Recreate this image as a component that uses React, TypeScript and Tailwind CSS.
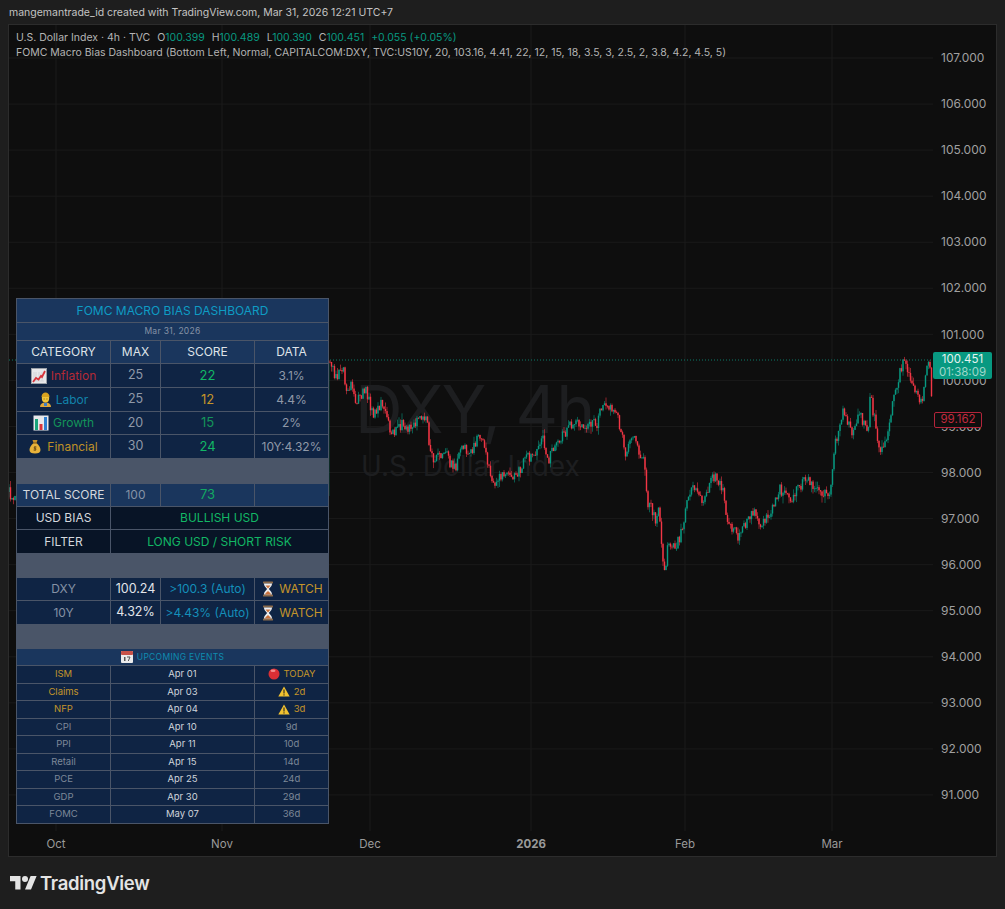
import { useMemo } from 'react'

const prices = [107, 106, 105, 104, 103, 102, 101, 100, 99, 98, 97, 96, 95, 94, 93, 92, 91]
const gridX = [56, 222, 370, 531, 685, 832]

// rough close path read off the chart, in page pixels
const path: [number, number][] = [
  [9, 492], [16, 505], [328, 362], [330, 365], [337, 373], [343, 372], [347, 393], [352, 385], [355, 400], [365, 393],
  [373, 410], [382, 403], [390, 432], [403, 427], [410, 428], [419, 415], [427, 423], [430, 447], [435, 457],
  [447, 457], [455, 467], [462, 447], [467, 455], [477, 440], [482, 443], [490, 468], [496, 482], [510, 472],
  [520, 473], [528, 455], [535, 458], [542, 437], [547, 462], [553, 445], [563, 438], [573, 418], [580, 433],
  [590, 418], [597, 425], [603, 408], [612, 408], [620, 428], [625, 453], [633, 435], [638, 455], [645, 463],
  [647, 497], [652, 507], [655, 525], [659, 507], [662, 553], [665, 570], [668, 535], [675, 553], [682, 532],
  [685, 507], [692, 487], [702, 502], [713, 477], [723, 490], [727, 520], [738, 538], [742, 523], [753, 515],
  [760, 525], [773, 510], [780, 487], [793, 500], [805, 477], [817, 493], [830, 492], [835, 447], [843, 410],
  [853, 437], [860, 412], [868, 433], [870, 398], [880, 447], [887, 437], [893, 403], [900, 370], [903, 357],
  [910, 380], [922, 403], [927, 368], [930, 370], [933, 417],
]

function interp(x: number) {
  for (let i = 1; i < path.length; i++) {
    if (x <= path[i][0]) {
      const [x0, y0] = path[i - 1]
      const [x1, y1] = path[i]
      return y0 + ((y1 - y0) * (x - x0)) / (x1 - x0)
    }
  }
  return path[path.length - 1][1]
}

function buildCandles() {
  let seed = 41
  const rnd = () => {
    seed = (seed * 16807) % 2147483647
    return seed / 2147483647
  }
  const out: { x: number; o: number; c: number; h: number; l: number }[] = []
  let prev = interp(9)
  for (let x = 9; x < 933; x += 1.5) {
    if (x > 16 && x < 328) continue
    const c = interp(x) + (rnd() - 0.5) * 11 + Math.sin(x / 3.1) * 3
    const o = prev
    const h = Math.min(o, c) - rnd() * rnd() * 8
    const l = Math.max(o, c) + rnd() * rnd() * 8
    out.push({ x, o, c, h, l })
    prev = c
  }
  return out
}

function Candles() {
  const candles = useMemo(buildCandles, [])
  return (
    <svg width="924" height="806" viewBox="9 25 924 806" className="absolute left-0 top-0">
      {gridX.map(x => (
        <line key={x} x1={x} x2={x} y1="25" y2="831" stroke="#1a1a1a" />
      ))}
      {prices.map((_, i) => (
        <line key={i} x1="9" x2="933" y1={58 + i * 46.06} y2={58 + i * 46.06} stroke="#1a1a1a" />
      ))}
      <text x="355" y="433" fontFamily="Inter, sans-serif" fontSize="66" letterSpacing="-2" fill="#1d1e20">DXY, 4h</text>
      <text x="361" y="476" fontFamily="Inter, sans-serif" fontSize="28" fill="#1d1e20">U.S. Dollar Index</text>
      <line x1="9" x2="933" y1="360" y2="360" stroke="#0b7a68" strokeDasharray="1 2" />
      {candles.map(k => {
        const col = k.c <= k.o ? '#089981' : '#f23645'
        return (
          <g key={k.x} fill={col}>
            <rect x={k.x - 0.35} y={k.h} width="0.7" height={k.l - k.h} opacity="0.8" />
            <rect x={k.x - 0.7} y={Math.min(k.o, k.c)} width="1.4" height={Math.max(0.8, Math.abs(k.c - k.o))} />
          </g>
        )
      })}
    </svg>
  )
}

function ChartUp() {
  return (
    <svg width="16" height="16" viewBox="0 0 16 16" className="shrink-0">
      <rect x="0.5" y="0.5" width="15" height="15" fill="#e8e8ea" stroke="#9aa0a8" />
      <path d="M3 4v9h10M5 4v9M8 4v9M11 4v9" stroke="#c4c7cc" strokeWidth="0.6" fill="none" />
      <path d="M2 14l3-4 2.5 1.5L10 8l1 1 3-6" stroke="#d8343c" strokeWidth="1.8" fill="none" />
    </svg>
  )
}

function Worker() {
  return (
    <svg width="13" height="16" viewBox="0 0 13 16" className="shrink-0">
      <path d="M1 15c0-3 2-4.500 5.500-4.500S12 12 12 15z" fill="#e0a93a" />
      <rect x="5" y="11" width="3" height="3" fill="#3f7fc4" />
      <ellipse cx="6.500" cy="6" rx="3.700" ry="4.500" fill="#f2c63a" />
      <path d="M2.500 5c0-6 8-6 8 0z" fill="#d8a21f" />
      <path d="M4.500 7h1.300M7.300 7h1.300" stroke="#8a6512" strokeWidth="0.8" />
    </svg>
  )
}

function Bars() {
  return (
    <svg width="16" height="16" viewBox="0 0 16 16" className="shrink-0">
      <rect x="0.5" y="0.5" width="15" height="15" fill="#e8e8ea" />
      <rect x="2" y="4" width="3" height="11" fill="#1aa37a" />
      <rect x="6.500" y="9" width="3" height="6" fill="#d8343c" />
      <rect x="11" y="2" width="3" height="13" fill="#2f7fd0" />
    </svg>
  )
}

function MoneyBag() {
  return (
    <svg width="12" height="15" viewBox="0 0 12 15" className="shrink-0">
      <path d="M3.500 1h5L7.500 4h-3z" fill="#c9922a" />
      <path d="M4.500 4h3C10 6 11.500 9 11.500 11c0 2.500-2 3.500-5.500 3.500S.5 13.500.5 11C.5 9 2 6 4.500 4z" fill="#e8b23a" />
      <rect x="4" y="3.500" width="4" height="1" fill="#7a5518" />
      <path d="M7.500 8H5.300v1.500h1.500V11H4.500M6 7v5" stroke="#6b4a12" strokeWidth="0.8" fill="none" />
    </svg>
  )
}

function Hourglass() {
  return (
    <svg width="12" height="16" viewBox="0 0 12 16" className="shrink-0">
      <rect x="1" y="0.500" width="10" height="2" rx="0.500" fill="#8b6a4a" />
      <rect x="1" y="13.500" width="10" height="2" rx="0.500" fill="#8b6a4a" />
      <path d="M2 2.500h8c0 3-2.500 4-3 5.500.5 1.500 3 2.500 3 5.500H2c0-3 2.500-4 3-5.500-.5-1.500-3-2.500-3-5.500z" fill="#eceef0" />
      <path d="M3.500 4.500h5L6 7.500zM3 13.500c.5-2 2-2.500 3-3.500 1 1 2.500 1.500 3 3.500z" fill="#c9713c" />
    </svg>
  )
}

function Calendar() {
  return (
    <svg width="12" height="12" viewBox="0 0 12 12" className="shrink-0">
      <rect width="12" height="12" rx="1" fill="#ececec" />
      <rect width="12" height="4" rx="1" fill="#c8534a" />
      <rect x="3" y="6" width="1.500" height="4" fill="#555" />
      <path d="M6 6h3L7.300 10" stroke="#555" strokeWidth="1" fill="none" />
    </svg>
  )
}

function RedDot() {
  return (
    <svg width="12" height="12" viewBox="0 0 12 12" className="shrink-0">
      <circle cx="6" cy="6" r="5.500" fill="#d92f35" />
      <ellipse cx="5" cy="2.800" rx="2.500" ry="1.200" fill="#f28a8a" />
    </svg>
  )
}

function Warn() {
  return (
    <svg width="12" height="11" viewBox="0 0 12 11" className="shrink-0">
      <path d="M6 .5L11.700 10.500H.3z" fill="#f2c230" />
      <rect x="5.400" y="3.500" width="1.200" height="4" fill="#3a3220" />
      <rect x="5.400" y="8.300" width="1.200" height="1.200" fill="#3a3220" />
    </svg>
  )
}

const Cell = ({ className = '', children }: { className?: string; children?: React.ReactNode }) => (
  <div className={`flex items-center justify-center gap-1 whitespace-nowrap ${className}`}>{children}</div>
)

const rows = [
  { icon: <ChartUp />, name: 'Inflation', nameCls: 'text-[#b52a35]', max: '25', score: '22', scoreCls: 'text-[#12b765]', data: '3.1%' },
  { icon: <Worker />, name: 'Labor', nameCls: 'text-[#1283ab]', max: '25', score: '12', scoreCls: 'text-[#c4952a]', data: '4.4%' },
  { icon: <Bars />, name: 'Growth', nameCls: 'text-[#14945a]', max: '20', score: '15', scoreCls: 'text-[#14945a]', data: '2%' },
  { icon: <MoneyBag />, name: 'Financial', nameCls: 'gap-[6px] text-[#bf9027]', max: '30', score: '24', scoreCls: 'text-[#12b765]', data: '10Y:4.32%' },
]

const events = [
  { n: 'ISM', d: 'Apr 01', w: 'TODAY', hot: true, icon: <RedDot /> },
  { n: 'Claims', d: 'Apr 03', w: '2d', hot: true, icon: <Warn /> },
  { n: 'NFP', d: 'Apr 04', w: '3d', hot: true, icon: <Warn /> },
  { n: 'CPI', d: 'Apr 10', w: '9d' },
  { n: 'PPI', d: 'Apr 11', w: '10d' },
  { n: 'Retail', d: 'Apr 15', w: '14d' },
  { n: 'PCE', d: 'Apr 25', w: '24d' },
  { n: 'GDP', d: 'Apr 30', w: '29d' },
  { n: 'FOMC', d: 'May 07', w: '36d' },
]

function Dashboard() {
  return (
    <div className="absolute left-[7px] top-[273px] w-[313px] bg-[#4a5568] p-px text-[12px] text-[#d4d8de]">
      <div className="grid grid-cols-[93px_49px_93px_73px] gap-px">
        <Cell className="col-span-4 h-[23px] bg-[#1a365d] text-[#0e9cc4]">FOMC MACRO BIAS DASHBOARD</Cell>
        <Cell className="col-span-4 h-[17px] bg-[#1a365d] text-[8.5px] tracking-[0.3px] text-[#8592a5]">Mar 31, 2026</Cell>
        {['CATEGORY', 'MAX', 'SCORE', 'DATA'].map(h => (
          <Cell key={h} className="h-[22px] bg-[#1a365d] text-[#dfe3e8]">{h}</Cell>
        ))}
        {rows.map((r, i) => (
          <div key={r.name} className="contents">
            <Cell className={`${i === 2 ? 'h-[22px]' : 'h-[23px]'} bg-[#0f2444] ${r.nameCls}`}>{r.icon}{r.name}</Cell>
            <Cell className="bg-[#0f2444] text-[12.5px] text-[#8f99a8]">{r.max}</Cell>
            <Cell className={`bg-[#0f2444] text-[13px] ${r.scoreCls}`}>{r.score}</Cell>
            <Cell className="bg-[#0f2444] text-[#8f99a8]">{r.data}</Cell>
          </div>
        ))}
        <div className="col-span-4 h-[24px]" />

        <Cell className="h-[22px] bg-[#1a365d] text-[#d4d8de]">TOTAL SCORE</Cell>
        <Cell className="bg-[#1a365d] text-[#8592a5]">100</Cell>
        <Cell className="bg-[#1a365d] text-[13px] text-[#12a862]">73</Cell>
        <Cell className="bg-[#1a365d]" />
        <Cell className="h-[22px] bg-[#081426]">USD BIAS</Cell>
        <Cell className="col-span-3 bg-[#081426] text-[#12b765]">BULLISH USD</Cell>
        <Cell className="h-[23px] bg-[#081426]">FILTER</Cell>
        <Cell className="col-span-3 bg-[#081426] text-[#12b765]">LONG USD / SHORT RISK</Cell>
        <div className="col-span-4 h-[23px]" />

        <Cell className="h-[22px] bg-[#0f2444] text-[#8592a5]">DXY</Cell>
        <Cell className="bg-[#0f2444] text-[12.5px] text-[#e2e5ea]">100.24</Cell>
        <Cell className="bg-[#0f2444] text-[#148fba]">&gt;100.3 (Auto)</Cell>
        <Cell className="gap-[5px] bg-[#0f2444] pl-[2px] text-[#c4952a]"><Hourglass />WATCH</Cell>
        <Cell className="h-[23px] bg-[#0f2444] text-[#8592a5]">10Y</Cell>
        <Cell className="bg-[#0f2444] text-[12.5px] text-[#e2e5ea]">4.32%</Cell>
        <Cell className="bg-[#0f2444] text-[#148fba]">&gt;4.43% (Auto)</Cell>
        <Cell className="gap-[5px] bg-[#0f2444] pl-[2px] text-[#c4952a]"><Hourglass />WATCH</Cell>
        <div className="col-span-4 h-[23px]" />

        <Cell className="col-span-4 h-[16px] bg-[#1a365d] text-[8.5px] tracking-[0.3px] text-[#0e8cb0]"><Calendar />UPCOMING EVENTS</Cell>
        {events.map(e => (
          <div key={e.n} className="contents">
            <Cell className={`h-[16.5px] bg-[#0f2444] text-[9.5px] ${e.hot ? 'text-[#c4952a]' : 'text-[#7d8898]'}`}>{e.n}</Cell>
            <Cell className="col-span-2 bg-[#0f2444] text-[9.5px] text-[#cfd4db]">{e.d}</Cell>
            <Cell className={`bg-[#0f2444] text-[9.5px] ${e.hot ? 'text-[#c4952a]' : 'text-[#7d8898]'}`}>{e.icon}{e.w}</Cell>
          </div>
        ))}
      </div>
    </div>
  )
}

export default function App() {
  return (
    <div className="h-[909px] w-[1005px] overflow-hidden bg-[#1e1e1e] font-['Inter',sans-serif] text-[#b4b4b4]">
      <div className="h-[24px] pl-[9px] pt-[5px] text-[10.5px] leading-[16px] text-[#c4c4c4]">
        mangemantrade_id created with TradingView.com, Mar 31, 2026 12:21 UTC+7
      </div>
      <div className="ml-[8px] h-[833px] w-[989px] border border-[#2c2c2c] bg-[#0e0e0e]">
        <div className="flex h-[806px]">
          <div className="relative w-[924px] shrink-0">
            <Candles />
            <div className="absolute left-[7px] top-[5px] whitespace-nowrap text-[10.5px] leading-[15px] text-[#b4b4b4]">
              <div>
                U.S. Dollar Index · 4h · TVC<span className="ml-[7px]">O</span><span className="text-[#089981]">100.399</span>
                <span className="ml-[7px]">H</span><span className="text-[#089981]">100.489</span>
                <span className="ml-[7px]">L</span><span className="text-[#089981]">100.390</span>
                <span className="ml-[7px]">C</span><span className="text-[#089981]">100.451</span>
                <span className="ml-[7px] text-[#089981]">+0.055 (+0.05%)</span>
              </div>
              <div>FOMC Macro Bias Dashboard (Bottom Left, Normal, CAPITALCOM:DXY, TVC:US10Y, 20, 103.16, 4.41, 22, 12, 15, 18, 3.5, 3, 2.5, 2, 3.8, 4.2, 4.5, 5)</div>
            </div>
            <Dashboard />
          </div>
          <div className="relative flex-1 pt-[10px] text-[12px] text-[#a0a0a0]">
            {prices.map(p => (
              <div key={p} className="flex h-[46.08px] items-center pl-[8px]">{p.toFixed(3)}</div>
            ))}
            <div className="absolute left-0 top-[327px] flex h-[27px] w-[59px] flex-col items-center justify-center rounded-[2px] bg-[#089981] text-[11.5px] leading-[13px]">
              <span className="text-[#e4f4f0]">100.451</span>
              <span className="text-[#9fd8cb]">01:38:09</span>
            </div>
            <div className="absolute left-[1px] top-[387px] flex h-[16px] w-[48px] items-center justify-center rounded-[2px] border border-[#b3243a] bg-[#0e0e0e] text-[11.5px] text-[#c22a3e]">
              99.162
            </div>
          </div>
        </div>
        <div className="flex h-[25px] items-center pt-[3px] text-[11.5px] text-[#9a9a9a]">
          <span className="ml-[17px] w-[60px] text-center">Oct</span>
          <span className="ml-[106px] w-[60px] text-center">Nov</span>
          <span className="ml-[88px] w-[60px] text-center">Dec</span>
          <span className="ml-[101px] w-[60px] text-center font-bold">2026</span>
          <span className="ml-[94px] w-[60px] text-center">Feb</span>
          <span className="ml-[87px] w-[60px] text-center">Mar</span>
        </div>
      </div>
      <div className="flex items-center gap-[3px] pl-[10px] pt-[15px] text-[#e4e4e4]">
        <svg width="27" height="21" viewBox="0 0 36 28" fill="currentColor">
          <path d="M14 22H7V11H0V4h14v18zM28 22h-8l7.500-18h8L28 22z" />
          <circle cx="20" cy="8" r="4" />
        </svg>
        <span className="text-[18.5px] font-semibold leading-[22px] tracking-[-0.3px]">TradingView</span>
      </div>
    </div>
  )
}
